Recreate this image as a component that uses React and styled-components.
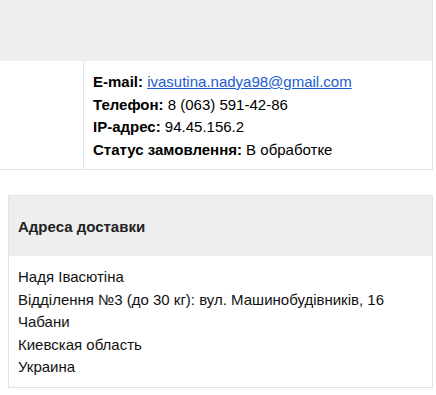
import React from "react";
import styled, { createGlobalStyle } from "styled-components";

const Global = createGlobalStyle`
  html, body { margin: 0; padding: 0; background: #fff; }
  body { font-family: "Liberation Sans", Arial, sans-serif; font-size: 15px; color: #000; }
`;

const Page = styled.div`
  width: 436px;
  display: flex;
  flex-direction: column;
`;

const InfoCard = styled.div`
  width: 432px;
  border-right: 1px solid #e2e2e2;
  border-bottom: 1px solid #e2e2e2;
`;

const CardHeader = styled.div`
  height: ${(p) => p.$h}px;
  background: #eeeeee;
  display: flex;
  align-items: center;
  padding: 0 9px;
  font-weight: bold;
  color: #222;
`;

const InfoRow = styled.div`
  display: flex;
`;

const EmptyCol = styled.div`
  width: 83px;
  flex: none;
`;

const DetailCol = styled.div`
  flex: 1;
  border-left: 1px solid #e2e2e2;
  padding: 10px 9px 8px;
  line-height: 22.5px;
`;

const Line = styled.div`
  white-space: nowrap;
`;

const Label = styled.b`
  font-weight: bold;
`;

const Mail = styled.a`
  color: #1a5ccf;
  text-decoration: underline;
`;

const AddressCard = styled.div`
  margin: 25px 0 0 8px;
  width: 423px;
  border: 1px solid #e2e2e2;
`;

const AddressBody = styled.div`
  padding: 10px 9px 8px;
  line-height: 22.5px;
  color: #111;
`;

export default function App() {
  return (
    <Page>
      <Global />
      <InfoCard>
        <CardHeader $h={61} />
        <InfoRow>
          <EmptyCol />
          <DetailCol>
            <Line>
              <Label>E-mail:</Label>{" "}
              <Mail href="#">ivasutina.nadya98@gmail.com</Mail>
            </Line>
            <Line>
              <Label>Телефон:</Label> 8 (063) 591-42-86
            </Line>
            <Line>
              <Label>IP-адрес:</Label> 94.45.156.2
            </Line>
            <Line>
              <Label>Статус замовлення:</Label> В обработке
            </Line>
          </DetailCol>
        </InfoRow>
      </InfoCard>
      <AddressCard>
        <CardHeader $h={60}>Адреса доставки</CardHeader>
        <AddressBody>
          <Line>Надя Івасютіна</Line>
          <Line>Відділення №3 (до 30 кг): вул. Машинобудівників, 16</Line>
          <Line>Чабани</Line>
          <Line>Киевская область</Line>
          <Line>Украина</Line>
        </AddressBody>
      </AddressCard>
    </Page>
  );
}
